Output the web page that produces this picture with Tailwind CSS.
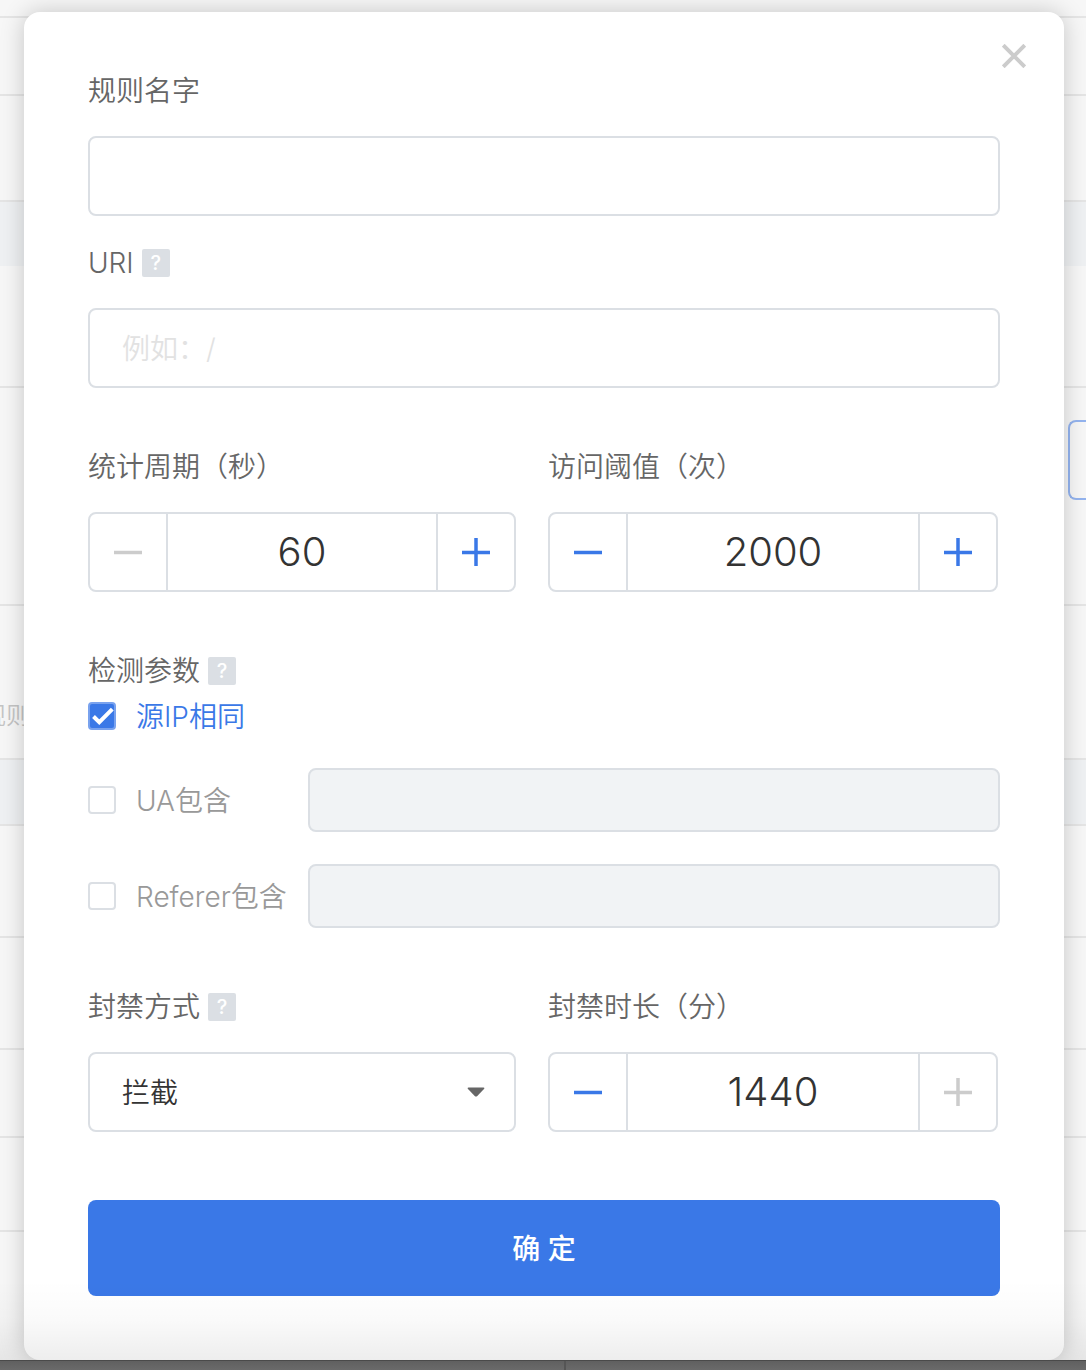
<!DOCTYPE html>
<html lang="zh-CN">
<head>
<meta charset="utf-8">
<meta name="viewport" content="width=device-width, initial-scale=1">
<title>规则设置</title>
<script src="https://cdn.jsdelivr.net/npm/@tailwindcss/browser@4"></script>
</head>
<body class="grid min-h-screen grid-rows-[1fr_10px] overflow-x-hidden bg-[#f7f7f7] font-['Inter','Noto_Sans_CJK_SC',sans-serif] text-[28px] font-[350] text-[#666]">

  <!-- Page behind the dialog -->
  <div aria-hidden="true" class="col-start-1 row-start-1 overflow-hidden text-2xl text-[#c4c4c4]">
    <div class="h-[18px] border-b-2 border-[#e5e5e5]"></div>
    <div class="h-[78px] border-b-2 border-[#e5e5e5]"></div>
    <div class="h-[106px] border-b-2 border-[#e5e5e5]"></div>
    <div class="h-16 bg-[#eff1f3]"></div>
    <div class="h-[122px] border-b-2 border-[#e5e5e5]"></div>
    <div class="flex h-[218px] justify-end border-b-2 border-[#e5e5e5] pt-8">
      <button type="button" tabindex="-1" class="h-20 w-[18px] rounded-l-lg border-2 border-r-0 border-[#94b4ef]"></button>
    </div>
    <div class="flex h-[154px] items-center border-b-2 border-[#e5e5e5] pt-17">
      <span class="-ml-[18px]">规则</span>
    </div>
    <div class="h-[66px] border-b-2 border-[#e5e5e5] bg-[#eff1f3]"></div>
    <div class="h-28 border-b-2 border-[#e5e5e5]"></div>
    <div class="h-28 border-b-2 border-[#e5e5e5]"></div>
    <div class="h-[88px] border-b-2 border-[#e5e5e5]"></div>
    <div class="h-[94px] border-b-2 border-[#e5e5e5]"></div>
  </div>

  <!-- Dialog -->
  <div class="relative col-start-1 row-start-1 overflow-hidden pt-3 pr-[22px] pl-6">
    <form role="dialog" aria-label="规则设置" class="relative rounded-2xl bg-white px-16 pt-14 pb-16 shadow-[0_0_24px_rgba(0,0,0,0.2)]">
      <button type="button" aria-label="关闭" class="absolute top-8 right-[38px]">
        <svg class="size-6" viewBox="0 0 24 24" fill="none" stroke="#ccc" stroke-width="4"><path d="M1.2 1.2 22.8 22.8M22.8 1.2 1.2 22.8"/></svg>
      </button>

      <label for="name" class="block leading-[46px]">规则名字</label>
      <input id="name" type="text" class="mt-[22px] block h-20 w-full rounded-lg border-2 border-[#dbdfe4] px-8 pt-0.5 text-[#333]">

      <div class="mt-6 flex items-center gap-2">
        <label for="uri" class="leading-[46px]">URI</label>
        <button type="button" class="size-7 rounded-xs bg-[#dbdfe4] text-center text-xl leading-7 font-medium text-white">?</button>
      </div>
      <input id="uri" type="text" placeholder="例如：/" class="mt-[22px] block h-20 w-full rounded-lg border-2 border-[#dbdfe4] px-8 pt-0.5 text-[#333] placeholder:text-[#e2e2e2]">

      <div class="mt-14 grid grid-cols-[428fr_450fr] gap-8 pr-0.5">
        <div>
          <label for="period" class="block leading-[46px]">统计周期（秒）</label>
          <div class="mt-[22px] flex h-20 rounded-lg border-2 border-[#dbdfe4]">
            <button type="button" disabled aria-label="减少" class="grid w-[78px] shrink-0 place-items-center border-r-2 border-[#dbdfe4] text-[#ccc]">
              <svg class="size-7" viewBox="0 0 28 28" fill="none" stroke="currentColor" stroke-width="3.500"><path d="M0 14.500H28"/></svg>
            </button>
            <input id="period" type="number" value="60" class="w-full min-w-0 [appearance:textfield] text-center text-[40px] text-[#333] [&::-webkit-inner-spin-button]:appearance-none">
            <button type="button" aria-label="增加" class="grid w-[78px] shrink-0 place-items-center border-l-2 border-[#dbdfe4] text-[#3a78e7]">
              <svg class="size-7" viewBox="0 0 28 28" fill="none" stroke="currentColor" stroke-width="3.500"><path d="M0 14.500H28M14 0V28"/></svg>
            </button>
          </div>
        </div>
        <div>
          <label for="threshold" class="block leading-[46px]">访问阈值（次）</label>
          <div class="mt-[22px] flex h-20 rounded-lg border-2 border-[#dbdfe4]">
            <button type="button" aria-label="减少" class="grid w-[78px] shrink-0 place-items-center border-r-2 border-[#dbdfe4] text-[#3a78e7]">
              <svg class="size-7" viewBox="0 0 28 28" fill="none" stroke="currentColor" stroke-width="3.500"><path d="M0 14.500H28"/></svg>
            </button>
            <input id="threshold" type="number" value="2000" class="w-full min-w-0 [appearance:textfield] text-center text-[40px] text-[#333] [&::-webkit-inner-spin-button]:appearance-none">
            <button type="button" aria-label="增加" class="grid w-[78px] shrink-0 place-items-center border-l-2 border-[#dbdfe4] text-[#3a78e7]">
              <svg class="size-7" viewBox="0 0 28 28" fill="none" stroke="currentColor" stroke-width="3.500"><path d="M0 14.500H28M14 0V28"/></svg>
            </button>
          </div>
        </div>
      </div>

      <div role="group" aria-labelledby="params" class="mt-14">
        <div class="flex items-center gap-2">
          <span id="params" class="leading-[46px]">检测参数</span>
          <button type="button" class="size-7 rounded-xs bg-[#dbdfe4] text-center text-xl leading-7 font-medium text-white">?</button>
        </div>
        <label class="mt-0.5 flex h-10 items-center gap-5 text-[#3a78e7]">
          <span class="grid">
            <input type="checkbox" checked class="col-start-1 row-start-1 size-7 appearance-none rounded-sm border-2 border-[#79a2ee] bg-[#3a78e7]">
            <svg class="pointer-events-none col-start-1 row-start-1 size-7" viewBox="0 0 28 28" fill="none" stroke="#fff" stroke-width="4"><path d="M5.500 14.500 11.300 20.200 24.300 7.200"/></svg>
          </span>
          <span class="pt-0.5">源IP相同</span>
        </label>
        <div class="mt-8 flex items-center">
          <label class="flex w-[220px] shrink-0 items-center gap-5 text-[#999]">
            <input type="checkbox" class="size-7 appearance-none rounded-sm border-2 border-[#dbdfe4] bg-white">
            <span class="pt-0.5">UA包含</span>
          </label>
          <input type="text" disabled aria-label="UA包含" class="h-16 w-full min-w-0 rounded-lg border-2 border-[#dbdfe4] bg-[#f1f3f5] px-8">
        </div>
        <div class="mt-8 flex items-center">
          <label class="flex w-[220px] shrink-0 items-center gap-5 text-[#999]">
            <input type="checkbox" class="size-7 appearance-none rounded-sm border-2 border-[#dbdfe4] bg-white">
            <span class="pt-0.5">Referer包含</span>
          </label>
          <input type="text" disabled aria-label="Referer包含" class="h-16 w-full min-w-0 rounded-lg border-2 border-[#dbdfe4] bg-[#f1f3f5] px-8">
        </div>
      </div>

      <div class="mt-14 grid grid-cols-[428fr_450fr] gap-8 pr-0.5">
        <div>
          <div class="flex items-center gap-2">
            <label for="mode" class="leading-[46px]">封禁方式</label>
            <button type="button" class="size-7 rounded-xs bg-[#dbdfe4] text-center text-xl leading-7 font-medium text-white">?</button>
          </div>
          <div class="mt-[22px] grid items-center">
            <select id="mode" class="col-start-1 row-start-1 h-20 w-full appearance-none rounded-lg border-2 border-[#dbdfe4] bg-white px-8 pt-0.5 text-[#333]">
              <option>拦截</option>
            </select>
            <svg class="pointer-events-none col-start-1 row-start-1 mr-[31px] h-2.5 w-[18px] justify-self-end" viewBox="0 0 18 10" fill="#666"><path d="M1.500 0.500H16.500Q18 0.800 17 2L10.300 9Q9 10.200 7.700 9L1 2Q0 0.800 1.500 0.500Z"/></svg>
          </div>
        </div>
        <div>
          <label for="duration" class="block leading-[46px]">封禁时长（分）</label>
          <div class="mt-[22px] flex h-20 rounded-lg border-2 border-[#dbdfe4]">
            <button type="button" aria-label="减少" class="grid w-[78px] shrink-0 place-items-center border-r-2 border-[#dbdfe4] text-[#3a78e7]">
              <svg class="size-7" viewBox="0 0 28 28" fill="none" stroke="currentColor" stroke-width="3.500"><path d="M0 14.500H28"/></svg>
            </button>
            <input id="duration" type="number" value="1440" class="w-full min-w-0 [appearance:textfield] text-center text-[40px] text-[#333] [&::-webkit-inner-spin-button]:appearance-none">
            <button type="button" disabled aria-label="增加" class="grid w-[78px] shrink-0 place-items-center border-l-2 border-[#dbdfe4] text-[#ccc]">
              <svg class="size-7" viewBox="0 0 28 28" fill="none" stroke="currentColor" stroke-width="3.500"><path d="M0 14.500H28M14 0V28"/></svg>
            </button>
          </div>
        </div>
      </div>

      <button type="submit" class="mt-17 h-24 w-full rounded-lg bg-[#3a78e7] pt-0.5 font-medium text-white">确 定</button>
    </form>
    <div class="pointer-events-none absolute inset-x-0 bottom-0 h-20 bg-linear-to-b from-transparent via-black/2 to-black/7"></div>
  </div>

  <!-- Bottom edge bar -->
  <div class="row-start-2 grid grid-cols-[566fr_520fr] border-t border-[#4a4a4a] bg-linear-to-b from-[#606060] to-[#6a6a6a]">
    <div class="border-r-2 border-[#555]"></div>
  </div>
</body>
</html>
